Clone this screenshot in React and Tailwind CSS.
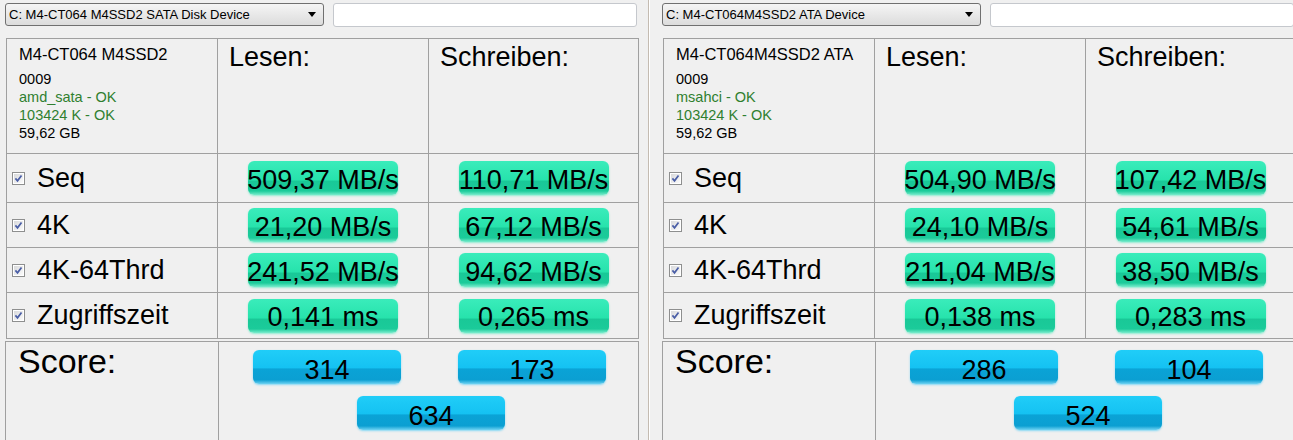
import React from 'react';

const drives = [
  {
    device: 'C: M4-CT064 M4SSD2 SATA Disk Device',
    name: 'M4-CT064 M4SSD2',
    firmware: '0009',
    driver: 'amd_sata - OK',
    align: '103424 K - OK',
    size: '59,62 GB',
    rows: [
      ['Seq', '509,37 MB/s', '110,71 MB/s'],
      ['4K', '21,20 MB/s', '67,12 MB/s'],
      ['4K-64Thrd', '241,52 MB/s', '94,62 MB/s'],
      ['Zugriffszeit', '0,141 ms', '0,265 ms'],
    ],
    score: ['314', '173', '634'],
  },
  {
    device: 'C: M4-CT064M4SSD2 ATA Device',
    name: 'M4-CT064M4SSD2 ATA',
    firmware: '0009',
    driver: 'msahci - OK',
    align: '103424 K - OK',
    size: '59,62 GB',
    rows: [
      ['Seq', '504,90 MB/s', '107,42 MB/s'],
      ['4K', '24,10 MB/s', '54,61 MB/s'],
      ['4K-64Thrd', '211,04 MB/s', '38,50 MB/s'],
      ['Zugriffszeit', '0,138 ms', '0,283 ms'],
    ],
    score: ['286', '104', '524'],
  },
];

const Dropdown = ({ label }) => (
  <div className="flex h-[23px] w-[319px] shrink-0 items-center justify-between rounded-[3px] border border-[#707070] bg-linear-to-b from-[#f5f5f5] to-[#dcdcdc] pl-[3px] pr-[7px] text-[13px] text-black">
    <span className="whitespace-nowrap">{label}</span>
    <svg width="8" height="5" viewBox="0 0 8 5">
      <path d="M0 0h8L4 5z" fill="#000" />
    </svg>
  </div>
);

const Checkbox = () => (
  <svg width="13" height="13" viewBox="0 0 13 13" className="shrink-0">
    <defs>
      <linearGradient id="cbFill" x1="0" y1="0" x2="1" y2="1">
        <stop offset="0" stopColor="#d8d9db" />
        <stop offset="1" stopColor="#fbfbfb" />
      </linearGradient>
    </defs>
    <rect x="0.5" y="0.5" width="12" height="12" fill="#fff" stroke="#8e8f8f" />
    <rect x="2" y="2" width="9" height="9" fill="url(#cbFill)" />
    <path d="M3.4 6.4l2.1 2.4 4-5.4" fill="none" stroke="#4a5ea6" strokeWidth="1.7" />
  </svg>
);

const Result = ({ children }) => (
  <div className="flex h-[34px] w-[150px] items-center justify-center whitespace-nowrap rounded-[6px] bg-[linear-gradient(to_bottom,#3aecbb_0%,#27e3ac_55%,#19c897_60%,#1bcb9a_88%,#7aeccd_100%)] pt-[4px] text-[27px] leading-none text-black shadow-[0_1px_2px_rgba(120,235,200,0.8)]">
    {children}
  </div>
);

const ScoreBox = ({ children }) => (
  <div className="flex h-[34px] w-[148px] items-center justify-center rounded-[6px] bg-[linear-gradient(to_bottom,#20cdf8_0%,#15c2f2_52%,#0aa3d6_56%,#0b9fd2_88%,#6fd3f3_100%)] pt-[6px] text-[27px] leading-none text-black shadow-[0_1px_2px_rgba(110,210,245,0.8)]">
    {children}
  </div>
);

const Panel = ({ drive }) => (
  <div className="shrink-0 pl-[5px] pt-[3px]">
    <div className="flex items-start">
      <Dropdown label={drive.device} />
      <div className="ml-[9px] h-[24px] w-[304px] shrink-0 rounded-[3px] border border-[#c5c8cd] bg-white" />
    </div>

    <div className="ml-px mt-[11px] grid w-[633px] grid-cols-[210px_210px_209px] grid-rows-[114px_48px_44px_44px_45px] gap-px border border-[#a0a0a0] bg-[#a0a0a0]">
      <div className="bg-[#f0f0f0] pl-[12px] pt-[7px]">
        <div className="text-[16.5px] leading-none">{drive.name}</div>
        <div className="mt-[7px] text-[14.5px] leading-[18px]">
          <div>{drive.firmware}</div>
          <div className="text-[#2f7f2f]">{drive.driver}</div>
          <div className="text-[#2f7f2f]">{drive.align}</div>
          <div>{drive.size}</div>
        </div>
      </div>
      <div className="bg-[#f0f0f0] pl-[11px] pt-[5px] text-[27px] leading-none">Lesen:</div>
      <div className="bg-[#f0f0f0] pl-[11px] pt-[5px] text-[27px] leading-none">Schreiben:</div>

      {drive.rows.map(([label, read, write]) => (
        <React.Fragment key={label}>
          <div className="flex items-center gap-[12px] bg-[#f0f0f0] pl-[5px] text-[27px] leading-none">
            <Checkbox />
            <span>{label}</span>
          </div>
          <div className="flex items-center justify-center bg-[#f0f0f0]">
            <Result>{read}</Result>
          </div>
          <div className="flex items-center justify-center bg-[#f0f0f0]">
            <Result>{write}</Result>
          </div>
        </React.Fragment>
      ))}
    </div>

    <div className="mt-[2px] grid h-[112px] w-[634px] grid-cols-[212px_419px] gap-px border border-[#a0a0a0] bg-[#a0a0a0]">
      <div className="bg-[#f0f0f0] pl-[12px] pt-[2px] text-[34px] leading-none">Score:</div>
      <div className="bg-[#f0f0f0] pt-[8px]">
        <div className="flex gap-[57px] pl-[34px]">
          <ScoreBox>{drive.score[0]}</ScoreBox>
          <ScoreBox>{drive.score[1]}</ScoreBox>
        </div>
        <div className="mt-[12px] pl-[138px]">
          <ScoreBox>{drive.score[2]}</ScoreBox>
        </div>
      </div>
    </div>
  </div>
);

export default function App() {
  return (
    <div className="flex h-[440px] w-[1293px] overflow-hidden bg-[#f0f0f0] font-['Liberation_Sans',Arial,sans-serif] text-black">
      <div className="w-[648px] shrink-0">
        <Panel drive={drives[0]} />
      </div>
      <div className="w-[2px] shrink-0 border-l border-r border-l-[#c4bbb1] border-r-white" />
      <div className="shrink-0 pl-[7px]">
        <Panel drive={drives[1]} />
      </div>
    </div>
  );
}
